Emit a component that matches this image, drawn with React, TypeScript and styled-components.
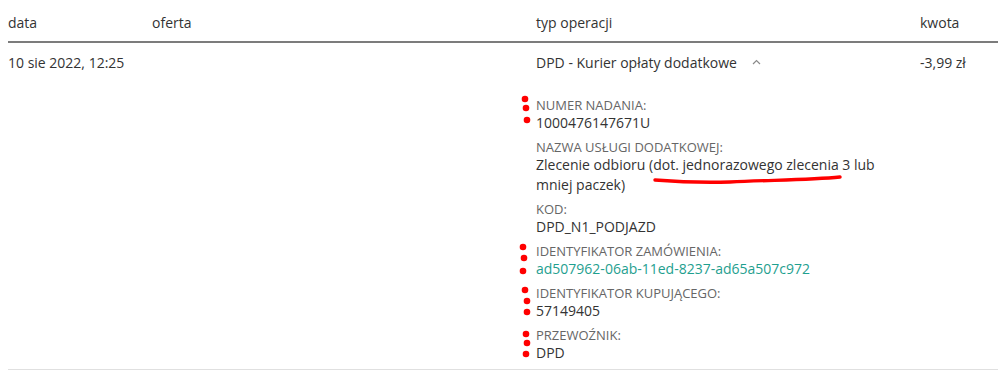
import styled, { createGlobalStyle } from "styled-components";

const GlobalStyle = createGlobalStyle`
  html, body {
    margin: 0;
    padding: 0;
    background: #fff;
  }
  body {
    font-family: "Open Sans", "Liberation Sans", sans-serif;
    font-size: 14px;
    color: #333;
    overflow: hidden;
  }
`;

type Detail = {
  label: string;
  value: string;
  link?: boolean;
};

const details: Detail[] = [
  { label: "Numer nadania:", value: "1000476147671U" },
  {
    label: "Nazwa usługi dodatkowej:",
    value: "Zlecenie odbioru (dot. jednorazowego zlecenia 3 lub mniej paczek)",
  },
  { label: "Kod:", value: "DPD_N1_PODJAZD" },
  {
    label: "Identyfikator zamówienia:",
    value: "ad507962-06ab-11ed-8237-ad65a507c972",
    link: true,
  },
  { label: "Identyfikator kupującego:", value: "57149405" },
  { label: "Przewoźnik:", value: "DPD" },
];

// red marks drawn over the screenshot
const dots: [number, number][] = [
  [525, 99],
  [526, 108],
  [527, 120],
  [523, 247],
  [524, 258],
  [523, 271],
  [525, 290],
  [527, 301],
  [527, 312],
  [526, 334],
  [527, 343],
  [526, 354],
];

function App() {
  return (
    <Page>
      <GlobalStyle />
      <Table>
        <HeadRow>
          <HeadCell>data</HeadCell>
          <HeadCell>oferta</HeadCell>
          <HeadCell>typ operacji</HeadCell>
          <HeadCell>kwota</HeadCell>
        </HeadRow>
        <BodyRow>
          <Cell>10 sie 2022, 12:25</Cell>
          <Cell />
          <Cell>
            <OperationTitle>
              DPD - Kurier opłaty dodatkowe
              <Chevron width="9" height="6" viewBox="0 0 9 6">
                <path d="M1 5 L4.5 1.5 L8 5" fill="none" stroke="#8a8a8a" strokeWidth="1.2" />
              </Chevron>
            </OperationTitle>
            <DetailList>
              {details.map((d) => (
                <DetailItem key={d.label}>
                  <DetailLabel>{d.label}</DetailLabel>
                  <DetailValue $link={d.link}>{d.value}</DetailValue>
                </DetailItem>
              ))}
            </DetailList>
          </Cell>
          <Cell>-3,99 zł</Cell>
        </BodyRow>
      </Table>
      <Marks width="998" height="374" viewBox="0 0 998 374">
        {dots.map(([x, y], i) => (
          <circle key={i} cx={x} cy={y} r="3.3" fill="#f00" />
        ))}
        <path
          d="M655 180 C680 182 700 183 730 182 C770 180 810 180 840 177"
          fill="none"
          stroke="#f00"
          strokeWidth="3.4"
          strokeLinecap="round"
        />
      </Marks>
    </Page>
  );
}

export default App;

const Page = styled.div`
  position: relative;
  width: 998px;
  height: 374px;
  padding-left: 8px;
  box-sizing: border-box;
`;

const Table = styled.div`
  width: 100%;
`;

const HeadRow = styled.div`
  display: grid;
  grid-template-columns: 144px 384px 384px 1fr;
  border-bottom: 2px solid #7c7c7c;
`;

const HeadCell = styled.div`
  padding: 13px 0 8px;
  line-height: 20px;
  color: #333;
`;

const BodyRow = styled.div`
  display: grid;
  grid-template-columns: 144px 384px 384px 1fr;
  border-bottom: 1px solid #e0e0e0;
`;

const Cell = styled.div`
  padding: 10px 0 6px;
  line-height: 20px;
`;

const OperationTitle = styled.div`
  display: flex;
  align-items: center;
`;

const Chevron = styled.svg`
  margin-left: 15px;
  margin-top: -2px;
`;

const DetailList = styled.div`
  display: flex;
  flex-direction: column;
  gap: 6px;
  margin-top: 24px;
  width: 350px;
`;

const DetailItem = styled.div`
  display: flex;
  flex-direction: column;
`;

const DetailLabel = styled.span`
  font-size: 13px;
  line-height: 16px;
  text-transform: uppercase;
  color: #666;
`;

const DetailValue = styled.span<{ $link?: boolean }>`
  font-size: 14px;
  line-height: 20px;
  color: ${(p) => (p.$link ? "#1fa08f" : "#333")};
`;

const Marks = styled.svg`
  position: absolute;
  left: 0;
  top: 0;
  pointer-events: none;
`;
